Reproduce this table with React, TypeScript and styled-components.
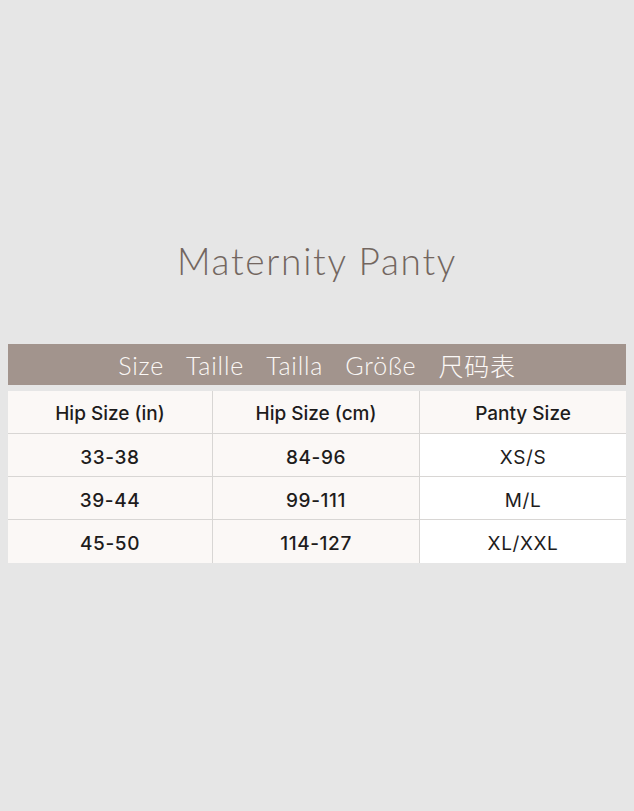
import React from "react";
import styled, { createGlobalStyle } from "styled-components";

const Global = createGlobalStyle`
  html, body { margin: 0; padding: 0; background: #e6e6e6; }
  body { font-family: "Lato", "Noto Sans CJK SC", sans-serif; }
`;

const Page = styled.div`
  width: 634px;
  height: 811px;
  background: #e6e6e6;
  padding: 236px 8px 0;
  box-sizing: border-box;
  display: flex;
  flex-direction: column;
`;

const Title = styled.h1`
  margin: 0;
  height: 50px;
  text-align: center;
  font-family: "Lato", sans-serif;
  font-weight: 300;
  font-size: 37px;
  letter-spacing: 1.7px;
  line-height: 50px;
  color: #736660;
`;

const Banner = styled.div`
  margin-top: 58px;
  height: 41px;
  background: #a2948d;
  color: #fbf8f6;
  display: flex;
  justify-content: center;
  align-items: center;
  gap: 22px;
  font-family: "Lato", "Noto Sans CJK SC", sans-serif;
  font-weight: 300;
  font-size: 25px;
  letter-spacing: 0.8px;
`;

const Table = styled.div`
  margin-top: 6px;
  display: grid;
  grid-template-columns: 205px 207px 206px;
  grid-auto-rows: 43px;
`;

const Cell = styled.div<{ $white?: boolean; $head?: boolean; $last?: boolean; $lastRow?: boolean }>`
  background: ${(p) => (p.$white ? "#ffffff" : "#fbf8f6")};
  border-right: ${(p) => (p.$last ? "none" : "1px solid #d8d6d4")};
  border-bottom: ${(p) => (p.$lastRow ? "none" : "1px solid #d8d6d4")};
  display: flex;
  align-items: center;
  justify-content: center;
  font-family: "Inter", sans-serif;
  font-size: 19px;
  color: #1e1c1c;
  font-weight: ${(p) => (p.$white ? 400 : 500)};
  letter-spacing: ${(p) => (p.$head ? "0" : "0.6px")};
  padding-top: ${(p) => (p.$head ? "2px" : "4px")};
  box-sizing: border-box;
`;

const rows = [
  ["33-38", "84-96", "XS/S"],
  ["39-44", "99-111", "M/L"],
  ["45-50", "114-127", "XL/XXL"],
];

export default function App() {
  return (
    <>
      <Global />
      <Page>
        <Title>Maternity Panty</Title>
        <Banner>
          <span>Size</span>
          <span>Taille</span>
          <span>Tailla</span>
          <span>Größe</span>
          <span>尺码表</span>
        </Banner>
        <Table>
          <Cell $head>Hip Size (in)</Cell>
          <Cell $head>Hip Size (cm)</Cell>
          <Cell $head $last>Panty Size</Cell>
          {rows.map((r, i) => (
            <React.Fragment key={i}>
              <Cell $lastRow={i === rows.length - 1}>{r[0]}</Cell>
              <Cell $lastRow={i === rows.length - 1}>{r[1]}</Cell>
              <Cell $white $last $lastRow={i === rows.length - 1}>{r[2]}</Cell>
            </React.Fragment>
          ))}
        </Table>
      </Page>
    </>
  );
}
